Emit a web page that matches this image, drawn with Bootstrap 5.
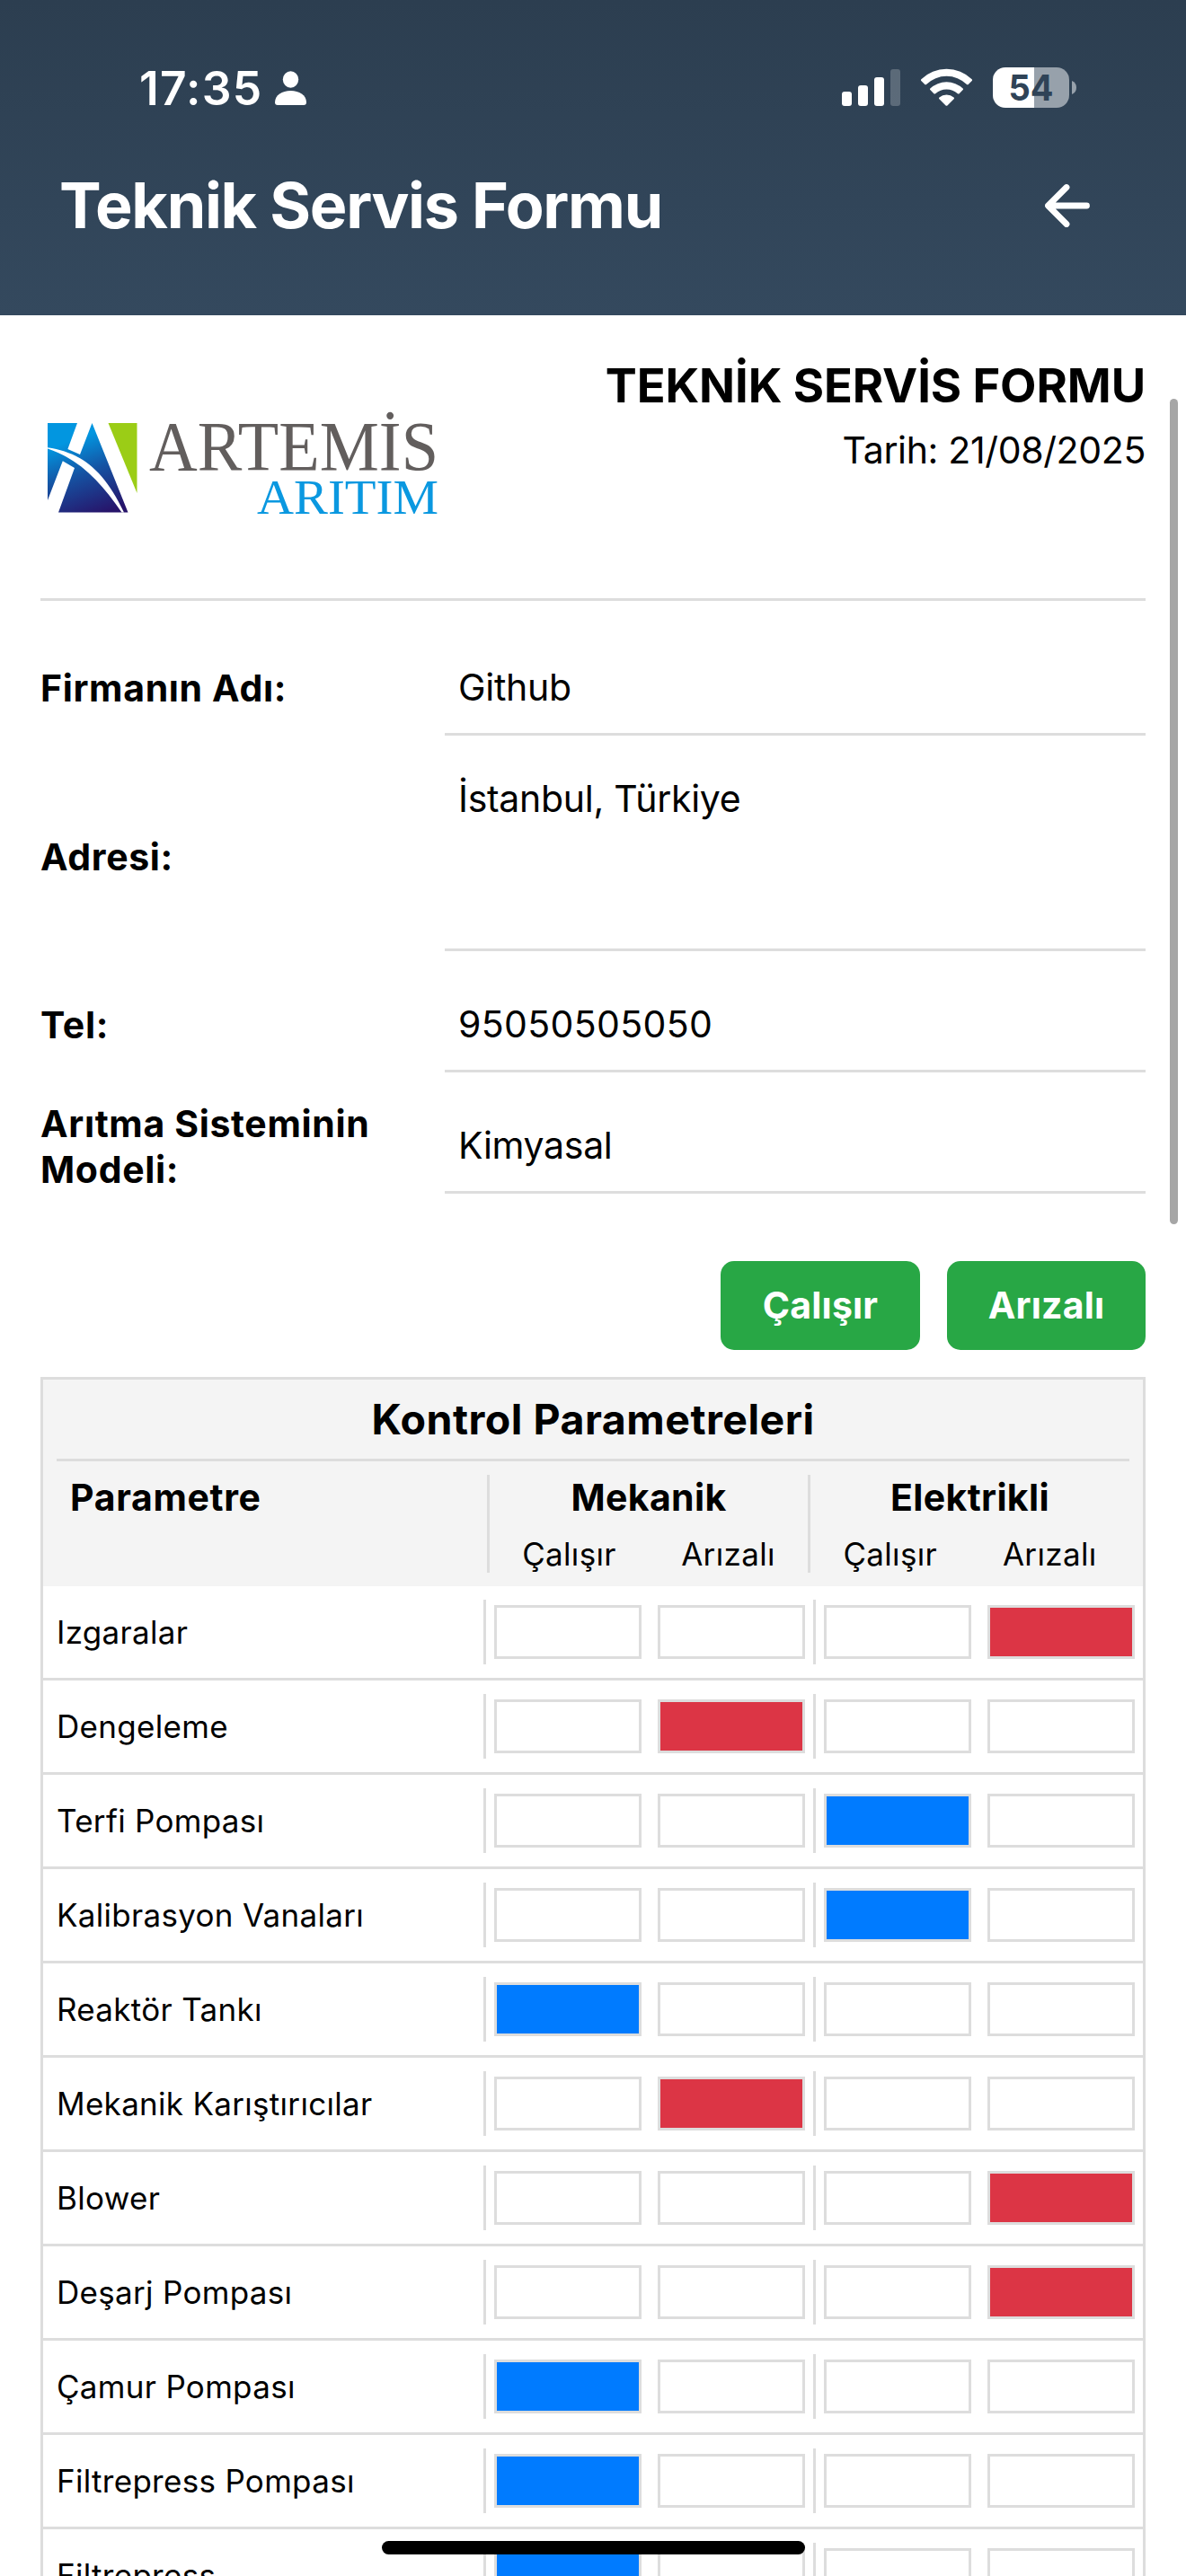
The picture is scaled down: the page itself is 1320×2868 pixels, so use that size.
<!DOCTYPE html>
<html lang="tr">
<head>
<meta charset="utf-8">
<meta name="viewport" content="width=device-width, initial-scale=1">
<title>Teknik Servis Formu</title>
<link href="https://cdn.jsdelivr.net/npm/bootstrap@5.3.0/dist/css/bootstrap.min.css" rel="stylesheet">
<style>
  html, body { width: 1320px; height: 2868px; overflow: hidden; }
  body { font-family: Inter, "Liberation Sans", sans-serif; color: #000; background: #fff; font-size: 41px; line-height: 51px; position: relative; }
  .app-head { height: 351px; padding-top: 68px; background: linear-gradient(180deg, #2c3e50, #34495e); color: #fff; }
  .status-line { height: 60px; padding-left: 155px; padding-right: 122px; }
  .clock { width: 151px; font-size: 51.5px; font-weight: 600; letter-spacing: 1.2px; line-height: 60px; }
  .title-line { height: 73px; margin-top: 64px; padding-left: 66px; padding-right: 103px; }
  .app-title { font-size: 70px; font-weight: 700; line-height: 73px; letter-spacing: -1.3px; }
  .sheet { padding: 0 45px; }
  .doc-head { padding: 45px 0; height: 318px; border-bottom: 3px solid #ddd; }
  .doc-title { font-size: 52.5px; font-weight: 700; line-height: 66px; letter-spacing: -.1px; }
  .doc-date { line-height: 50px; margin-top: 14px; letter-spacing: -.35px; }
  .fields { margin-top: 45px; gap: 30px; }
  .f-label { width: 450px; font-weight: 700; flex: none; letter-spacing: .65px; }
  .f-input { flex: 1; height: 105px; padding: 26px 15px 0; border-bottom: 3px solid #ddd; letter-spacing: -.3px; }
  .f-num { letter-spacing: .35px; }
  .f-area { height: 210px; padding-top: 15px; }
  .actions { margin-top: 75px; gap: 30px; }
  .act-btn { height: 99px; width: 221px; padding: 0; border: 0; border-radius: 15px; background: #28a745; color: #fff; font-size: 41px; font-weight: 700; line-height: 99px; letter-spacing: .2px; }
  .act-btn:first-child { width: 222px; }
  .grid-box { margin-top: 30px; border: 3px solid #ddd; }
  .grid-head { background: #f4f4f4; padding: 0 15px 15px; height: 230px; }
  .grid-title { height: 91px; line-height: 88px; font-size: 46.5px; font-weight: 700; letter-spacing: .5px; border-bottom: 3px solid #ddd; }
  .head-cols { padding-top: 15px; }
  .h-col { height: 109px; font-weight: 700; line-height: 50px; letter-spacing: .35px; border-right: 3px solid #ddd; }
  .h-param { width: 482px; padding-left: 15px; letter-spacing: .65px; }
  .h-mek { width: 357px; }
  .h-el { flex: 1; border-right: 0; }
  .h-sub { font-size: 35px; font-weight: 400; line-height: 44px; margin-top: 16px; }
  .g-row { height: 105px; border-bottom: 3px solid #ddd; padding: 15px 0; }
  .g-name { width: 493px; height: 72px; line-height: 72px; padding-left: 15px; font-size: 35px; letter-spacing: .3px; border-right: 3px solid #ddd; }
  .g-pair { width: 367px; height: 72px; padding: 0 9px; border-right: 3px solid #ddd; }
  .g-pair:last-child { width: 364px; border-right: 0; }
  .g-cell { width: 164px; height: 60px; border: 3px solid #ddd; background: #fff; }
  .g-cell.on-ok { background: #007bff; }
  .g-cell.on-bad { background: #dc3545; }
  .scroll-thumb { position: absolute; left: 1302px; top: 444px; width: 9px; height: 919px; border-radius: 5px; background: #a6a6a6; }
  .home-bar { position: absolute; left: 425px; top: 2829px; width: 471px; height: 15px; border-radius: 8px; background: #000; }
</style>
</head>
<body>
<header class="app-head">
  <div class="status-line d-flex align-items-center justify-content-between">
    <div class="d-flex align-items-center">
      <span class="clock">17:35</span>
      <svg width="35" height="38" viewBox="0 0 35 38" fill="#fff"><ellipse cx="17.5" cy="9.5" rx="8.7" ry="9.3"/><path d="M3 38Q0 38 0 35C0 27 8 22 17.500 22S35 27 35 35Q35 38 32 38Z"/></svg>
    </div>
    <svg width="261" height="46" viewBox="937 74 261 46">
      <g fill="#fff">
        <rect x="937" y="101" width="11" height="16" rx="3"/>
        <rect x="955" y="94" width="11" height="23" rx="3"/>
        <rect x="973" y="85" width="11" height="32" rx="3"/>
        <rect x="991" y="76" width="11" height="41" rx="3" opacity=".22"/>
      </g>
      <path d="M1025.300 87.300a40.500 40.500 0 0 1 56.400 0q.7.9 0 1.700l-4 4q-.8.7-1.700 0a32.300 32.300 0 0 0-45 0q-.9.7-1.700 0l-4-4q-.7-.8 0-1.700ZM1035.300 97.500a26.500 26.500 0 0 1 36.400 0q.7.8 0 1.600l-4.100 4.100q-.8.7-1.700 0a18.500 18.500 0 0 0-24.800 0q-.9.7-1.700 0l-4.100-4.100q-.7-.8 0-1.600ZM1045.400 107.500a12.600 12.600 0 0 1 16.200 0q.9.8 0 1.700l-7.200 7.200q-.9.800-1.800 0l-7.200-7.200q-.9-.9 0-1.700Z" fill="#fff"/>
      <clipPath id="battery"><rect x="1105" y="74" width="85" height="45" rx="14"/></clipPath>
      <g clip-path="url(#battery)"><rect x="1105" y="74" width="46" height="45" fill="#fff"/><rect x="1151" y="74" width="39" height="45" fill="#97a1ab"/></g>
      <path d="M1193 89q5 2 5 7.500t-5 7.500Z" fill="#97a1ab"/>
      <text x="1147.500" y="111" text-anchor="middle" font-family="Inter" font-size="40" font-weight="700" textLength="50" lengthAdjust="spacingAndGlyphs" fill="#2f4357">54</text>
    </svg>
  </div>
  <div class="title-line d-flex align-items-center justify-content-between">
    <h1 class="app-title m-0">Teknik Servis Formu</h1>
    <svg width="54" height="54" viewBox="0 0 54 54" fill="none" stroke="#fff" stroke-width="6.800" stroke-linecap="round" stroke-linejoin="round"><path d="M24 6.500L3.500 27L24 47.500M4 27H46.500"/></svg>
  </div>
</header>

<main class="sheet">
  <section class="doc-head d-flex justify-content-between">
    <svg width="450" height="225" viewBox="45 396 450 225">
      <defs><linearGradient id="mark" gradientUnits="userSpaceOnUse" x1="72" y1="485" x2="105" y2="575"><stop offset=".08" stop-color="#0296e0"/><stop offset=".48" stop-color="#1553a3"/><stop offset="1" stop-color="#27146a"/></linearGradient></defs>
      <path d="M53 471H86L75.400 500L89 506L102.500 471L142.500 570.500H65L83 521L69.800 513.300L53 557Z" fill="url(#mark)"/>
      <path d="M53 498.300C90 504 115 522 138 570.500H135.500C112 536 88 511 53 499.500Z" fill="#fff"/>
      <path d="M120.500 471H152.500V549Z" fill="#9bcd16"/>
      <text x="166" y="523.300" font-family="Liberation Serif" font-size="78" textLength="322" lengthAdjust="spacingAndGlyphs" fill="#625e5d">ARTEMİS</text>
      <text x="286" y="572" font-family="Liberation Serif" font-size="55.500" textLength="202" lengthAdjust="spacingAndGlyphs" fill="#0a98e0">ARITIM</text>
    </svg>
    <div class="text-end">
      <h2 class="doc-title mb-0">TEKNİK SERVİS FORMU</h2>
      <div class="doc-date">Tarih: 21/08/2025</div>
    </div>
  </section>

  <section class="fields d-flex flex-column">
    <div class="d-flex align-items-center"><div class="f-label">Firmanın Adı:</div><div class="f-input">Github</div></div>
    <div class="d-flex align-items-center"><div class="f-label">Adresi:</div><div class="f-input f-area">İstanbul, Türkiye</div></div>
    <div class="d-flex align-items-center"><div class="f-label">Tel:</div><div class="f-input f-num">95050505050</div></div>
    <div class="d-flex align-items-center"><div class="f-label">Arıtma Sisteminin Modeli:</div><div class="f-input">Kimyasal</div></div>
  </section>

  <div class="actions d-flex justify-content-end">
    <button class="btn act-btn">Çalışır</button>
    <button class="btn act-btn">Arızalı</button>
  </div>

  <section class="grid-box">
    <div class="grid-head">
      <div class="grid-title text-center">Kontrol Parametreleri</div>
      <div class="head-cols d-flex">
        <div class="h-col h-param">Parametre</div>
        <div class="h-col h-mek text-center">Mekanik<div class="h-sub d-flex"><span class="w-50">Çalışır</span><span class="w-50">Arızalı</span></div></div>
        <div class="h-col h-el text-center">Elektrikli<div class="h-sub d-flex"><span class="w-50">Çalışır</span><span class="w-50">Arızalı</span></div></div>
      </div>
    </div>
    <div id="rows"></div>
  </section>
</main>

<div class="scroll-thumb"></div>
<div class="home-bar"></div>

<script>
  // Each entry: name, then the index of the marked cell (0-1 mechanical, 2-3 electrical).
  const items = [["Izgaralar",3],["Dengeleme",1],["Terfi Pompası",2],["Kalibrasyon Vanaları",2],["Reaktör Tankı",0],["Mekanik Karıştırıcılar",1],["Blower",3],["Deşarj Pompası",3],["Çamur Pompası",0],["Filtrepress Pompası",0],["Filtrepress",0]];
  const cell = (i, on) => `<div class="g-cell${i === on ? (i % 2 ? " on-bad" : " on-ok") : ""}"></div>`;
  const pair = (a, on) => `<div class="g-pair d-flex align-items-center justify-content-between">${cell(a, on)}${cell(a + 1, on)}</div>`;
  document.getElementById("rows").innerHTML = items.map(([name, on]) =>
    `<div class="g-row d-flex"><div class="g-name">${name}</div>${pair(0, on)}${pair(2, on)}</div>`).join("");
</script>
<script src="https://cdn.jsdelivr.net/npm/bootstrap@5.3.0/dist/js/bootstrap.bundle.min.js"></script>
</body>
</html>
